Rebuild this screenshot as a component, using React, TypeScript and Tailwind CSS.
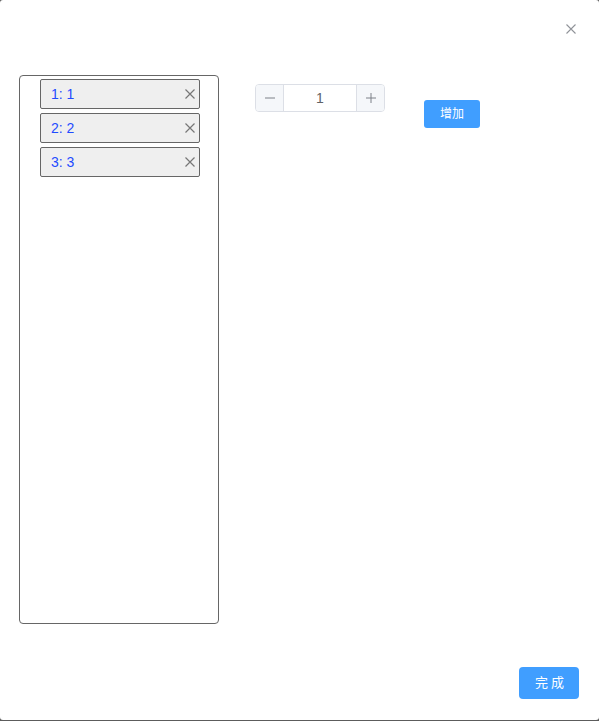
import React from "react";

const XIcon = ({ size = 10, color = "#777", sw = 1.3 }: { size?: number; color?: string; sw?: number }) => (
  <svg width={size} height={size} viewBox="0 0 10 10">
    <path d="M0.5 0.5 L9.5 9.5 M9.5 0.5 L0.5 9.5" stroke={color} strokeWidth={sw} fill="none" />
  </svg>
);

export default function App() {
  const items = ["1: 1", "2: 2", "3: 3"];
  return (
    <div className="h-[721px] w-[599px] bg-[#5c5c5c]" style={{ fontFamily: '"Liberation Sans", "Noto Sans CJK SC", Arial, sans-serif' }}>
      <div className="relative flex h-[720px] w-[599px] flex-col rounded-[3px] bg-white">
        <button className="absolute right-[23px] top-[24px] flex h-[10px] w-[10px] items-center justify-center">
          <XIcon size={10} color="#909399" sw={1.1} />
        </button>
        <div className="flex flex-1 items-start pl-[19px] pt-[75px]">
          <div className="flex h-[549px] w-[200px] flex-col items-start gap-[4px] rounded-[4px] border border-[#666] pl-[20px] pt-[3px]">
            {items.map((t) => (
              <div
                key={t}
                className="flex h-[30px] w-[160px] items-center justify-between rounded-[2px] border border-[#666] bg-[#efefef] pl-[10px] pr-[4px]"
              >
                <span className="text-[14px] text-[#1f4bff]">{t}</span>
                <XIcon size={10} color="#777" sw={1.2} />
              </div>
            ))}
          </div>
          <div className="ml-[36px] mt-[9px] flex h-[28px] w-[130px] overflow-hidden rounded-[4px] border border-[#dcdfe6]">
            <div className="flex h-full w-[28px] items-center justify-center border-r border-[#dcdfe6] bg-[#f5f7fa]">
              <svg width="10" height="10" viewBox="0 0 10 10">
                <path d="M0 5 H10" stroke="#7d8088" strokeWidth="1" />
              </svg>
            </div>
            <div className="flex flex-1 items-center justify-center text-[14px] text-[#606266]">1</div>
            <div className="flex h-full w-[28px] items-center justify-center border-l border-[#dcdfe6] bg-[#f5f7fa]">
              <svg width="10" height="10" viewBox="0 0 10 10">
                <path d="M0 5 H10 M5 0 V10" stroke="#7d8088" strokeWidth="1" />
              </svg>
            </div>
          </div>
          <button className="ml-[39px] mt-[25px] flex h-[28px] w-[56px] items-center justify-center rounded-[3px] bg-[#409eff] text-[12px] text-white">
            增加
          </button>
        </div>
        <div className="flex justify-end pb-[21px] pr-[20px]">
          <button className="flex h-[32px] w-[60px] items-center justify-center rounded-[4px] bg-[#409eff] pl-[4px] text-[13px] tracking-[3px] text-white">
            完成
          </button>
        </div>
      </div>
    </div>
  );
}
